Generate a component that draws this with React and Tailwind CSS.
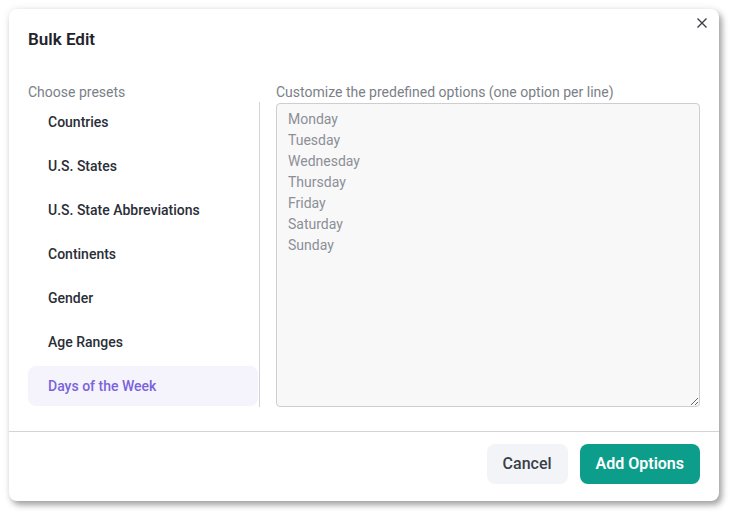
import { useState } from "react";

const presets = [
    "Countries",
    "U.S. States",
    "U.S. State Abbreviations",
    "Continents",
    "Gender",
    "Age Ranges",
    "Days of the Week",
];

const days = "Monday\nTuesday\nWednesday\nThursday\nFriday\nSaturday\nSunday";

export default function App() {
    const [active, setActive] = useState("Days of the Week");
    const [text, setText] = useState(days);

    return (
        <div className="min-h-screen bg-white pl-[9px] pt-[9px] font-['Roboto',sans-serif]">
            <div className="relative w-[710px] h-[492px] bg-white rounded-lg shadow-[3px_4px_6px_rgba(0,0,0,0.35),0_0_8px_rgba(0,0,0,0.08)] flex flex-col">
                <button className="absolute top-[7px] right-[10px] text-[#3b3f46]">
                    <svg width="14" height="14" viewBox="0 0 14 14" fill="none" stroke="currentColor" strokeWidth="1.4">
                        <path d="M2.5 2.5l9 9M11.5 2.5l-9 9"/>
                    </svg>
                </button>
                <div className="px-[19px] pt-[19px] h-[73px]">
                    <h2 className="text-[17px] leading-[22px] font-semibold text-[#1f232b]">Bulk Edit</h2>
                </div>
                <div className="flex px-[19px] gap-4 h-[349px]">
                    <div className="w-[232px] flex flex-col">
                        <div className="text-sm leading-5 text-[#7b7f87]">Choose presets</div>
                        <ul className="flex flex-col gap-1 border-r border-[#d4d4d8] h-[305px]">
                            {presets.map(p => (
                                <li key={p}
                                    onClick={() => setActive(p)}
                                    className={`h-10 flex items-center pl-5 mr-px rounded-lg text-sm font-medium cursor-pointer ${active === p ? "bg-[#f5f4fd] text-[#7a63dc]" : "text-[#2a2e37]"}`}>
                                    {p}
                                </li>
                            ))}
                        </ul>
                    </div>
                    <div className="flex-1 flex flex-col">
                        <label className="text-sm leading-5 text-[#7b7f87]">Customize the predefined options (one option per line)</label>
                        <textarea
                            value={text}
                            onChange={e => setText(e.target.value)}
                            className="mt-px h-[304px] w-full resize-y bg-[#f8f8f8] border border-[#cdced1] rounded px-[11px] py-[5px] text-sm leading-[21px] text-[#8b8f97] outline-none"
                        />
                    </div>
                </div>
                <div className="border-t border-[#d4d4d8] flex justify-end gap-3 px-[19px] pt-3">
                    <button className="h-10 px-4 rounded-lg bg-[#f3f4f7] text-[#3a3f4a] text-base font-medium">Cancel</button>
                    <button className="h-10 px-4 rounded-lg bg-[#0c9e8b] text-white text-base font-semibold">Add Options</button>
                </div>
            </div>
        </div>
    );
}
